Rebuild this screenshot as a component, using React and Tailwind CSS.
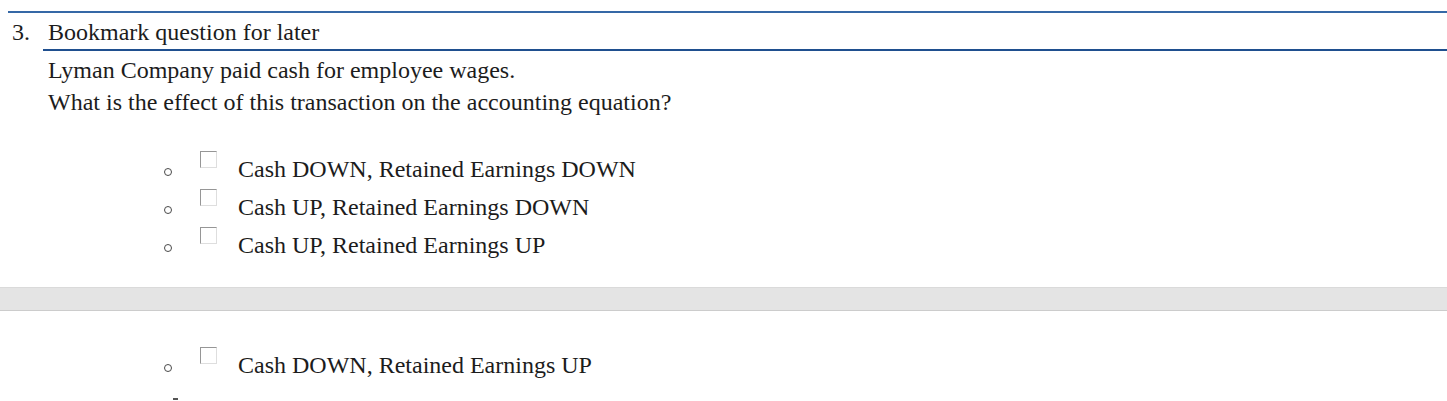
const options = [
  "Cash DOWN, Retained Earnings DOWN",
  "Cash UP, Retained Earnings DOWN",
  "Cash UP, Retained Earnings UP",
];

function Option({ label }) {
  return (
    <li className="flex h-[38px] pl-[164px]">
      <span className="mt-[18px] h-[8px] w-[8px] shrink-0 rounded-full border-[1.5px] border-[#4a4a4a]" />
      <span className="ml-[28px] mt-[1px] h-[17px] w-[17px] shrink-0 border border-t-[#969696] border-l-[#969696] border-r-[#dedede] border-b-[#dedede] bg-white" />
      <span className="ml-[21px] leading-[38px] whitespace-nowrap">{label}</span>
    </li>
  );
}

export default function App() {
  return (
    <div className="h-[401px] w-full overflow-hidden bg-white text-[24px] text-[#1c1c1c] font-['Liberation_Serif','Times_New_Roman',serif]">
      <div className="ml-[8px] mt-[11px] h-[2px] bg-[#3568a6]" />

      <div className="flex pl-[12px]">
        <span className="mt-[5px] w-[31px] shrink-0 leading-[28px]">3.</span>
        <div className="flex-1">
          <div className="border-b-2 border-[#1f4f8f] pl-[5px] pt-[5px] pb-[3px] leading-[28px]">
            Bookmark question for later
          </div>
          <p className="mt-[5px] pl-[5px] leading-[28px]">Lyman Company paid cash for employee wages.</p>
          <p className="mt-[4px] pl-[5px] leading-[28px]">What is the effect of this transaction on the accounting equation?</p>
        </div>
      </div>

      <ul className="mt-[34px]">
        {options.map((o) => (
          <Option key={o} label={o} />
        ))}
      </ul>

      <div className="mt-[23px] h-[24px] border-t border-b border-t-[#dadada] border-b-[#cccccc] bg-[#e4e4e4]" />

      <ul className="mt-[35px]">
        <Option label="Cash DOWN, Retained Earnings UP" />
      </ul>

      <div className="ml-[173px] mt-[14px] h-[2px] w-[5px] bg-[#555555]" />
    </div>
  );
}
